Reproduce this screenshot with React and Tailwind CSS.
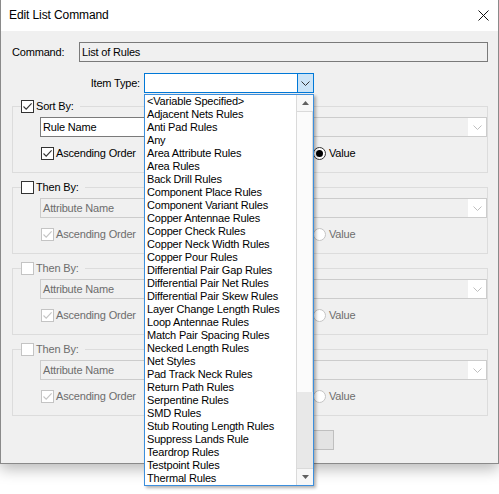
import React from "react";

const ITEMS = [
  "<Variable Specified>",
  "Adjacent Nets Rules",
  "Anti Pad Rules",
  "Any",
  "Area Attribute Rules",
  "Area Rules",
  "Back Drill Rules",
  "Component Place Rules",
  "Component Variant Rules",
  "Copper Antennae Rules",
  "Copper Check Rules",
  "Copper Neck Width Rules",
  "Copper Pour Rules",
  "Differential Pair Gap Rules",
  "Differential Pair Net Rules",
  "Differential Pair Skew Rules",
  "Layer Change Length Rules",
  "Loop Antennae Rules",
  "Match Pair Spacing Rules",
  "Necked Length Rules",
  "Net Styles",
  "Pad Track Neck Rules",
  "Return Path Rules",
  "Serpentine Rules",
  "SMD Rules",
  "Stub Routing Length Rules",
  "Suppress Lands Rule",
  "Teardrop Rules",
  "Testpoint Rules",
  "Thermal Rules",
];

function Check({ checked, disabled }) {
  return (
    <span
      className={
        disabled
          ? "flex h-[13px] w-[13px] shrink-0 items-center justify-center border border-[#c4c4c4] bg-white"
          : "flex h-[13px] w-[13px] shrink-0 items-center justify-center border border-[#333333] bg-white"
      }
    >
      {checked && (
        <svg width="11" height="11" viewBox="0 0 11 11">
          <path
            d="M1.5 5.5 L4.2 8.2 L9.6 2.3"
            fill="none"
            stroke={disabled ? "#c4c4c4" : "#333333"}
            strokeWidth="1.1"
          />
        </svg>
      )}
    </span>
  );
}

function Radio({ checked, disabled }) {
  return (
    <svg width="13" height="13" viewBox="0 0 13 13" className="shrink-0">
      <circle cx="6.5" cy="6.5" r="6" fill="white" stroke={disabled ? "#c4c4c4" : "#333333"} strokeWidth="1" />
      {checked && <circle cx="6.5" cy="6.5" r="3.5" fill="#000" />}
    </svg>
  );
}

function Chevron({ color }) {
  return (
    <svg width="9" height="5" viewBox="0 0 9 5">
      <path d="M0.5 0.5 L4.5 4.5 L8.5 0.5" fill="none" stroke={color} strokeWidth="1" />
    </svg>
  );
}

function Group({ enabled, checked, label, comboText, first }) {
  const labelCls = enabled ? "text-black" : "text-[#6d6d6d]";
  return (
    <fieldset className={first ? "border border-[#dcdcdc]" : "mt-[8px] border border-[#dcdcdc]"}>
      <legend className="ml-[8px] flex h-[13px] items-center gap-[2px] pr-[6px]">
        <Check checked={checked} disabled={label === "disabled"} />
        <span className={labelCls + " leading-[13px]"}>{label === "disabled" ? "Then By:" : label}</span>
      </legend>
      <div className="pl-[27px] pt-[4px] pb-[12px]">
        {first ? (
          <div className="flex h-[20px]">
            <div className="flex w-[190px] items-center border-y border-l border-[#7a7a7a] bg-white pl-[2px]">
              Rule Name
            </div>
            <div className="flex flex-1 items-center justify-end border-y border-r border-[#cccccc] bg-[#f0f0f0]">
              <div className="flex h-full w-[18px] items-center justify-center bg-white">
                <Chevron color="#bfbfbf" />
              </div>
            </div>
          </div>
        ) : (
          <div className="flex h-[20px] items-center border border-[#cccccc] bg-[#f0f0f0]">
            <span className="flex-1 pl-[2px] text-[#6d6d6d]">{comboText}</span>
            <div className="flex h-full w-[18px] items-center justify-center bg-white">
              <Chevron color="#bfbfbf" />
            </div>
          </div>
        )}
        <div className="mt-[10px] flex h-[13px] items-center">
          <div className="flex w-[273px] items-center gap-[2px] pl-[1px]">
            <Check checked disabled={!first} />
            <span className={first ? "text-black" : "text-[#6d6d6d]"}>Ascending Order</span>
          </div>
          <div className="flex items-center gap-[3px]">
            <Radio checked={first} disabled={!first} />
            <span className={first ? "text-black" : "text-[#6d6d6d]"}>Value</span>
          </div>
        </div>
      </div>
    </fieldset>
  );
}

export default function App() {
  return (
    <div className="h-[494px] w-[499px] overflow-hidden bg-white font-['Liberation_Sans',Arial,sans-serif] text-[11px] leading-[13px] tracking-[-0.18px] text-black">
      <div className="w-[499px] border-x border-b border-[#8a8a8a] shadow-[0_5px_14px_rgba(0,0,0,0.28)]">
        <div className="flex h-[31px] items-center justify-between bg-white pl-[8px] pr-[9px]">
          <span className="text-[12px] tracking-[-0.1px]">Edit List Command</span>
          <svg width="11" height="11" viewBox="0 0 11 11">
            <path d="M0.5 0.5 L10.5 10.5 M10.5 0.5 L0.5 10.5" stroke="#111" strokeWidth="1" />
          </svg>
        </div>
        <div className="bg-[#f0f0f0] pl-[11px] pr-[10px] pt-[11px] pb-[13px]">
          <div className="flex h-[20px] items-center">
            <span className="w-[67px]">Command:</span>
            <div className="flex h-[20px] flex-1 items-center border border-[#7a7a7a] bg-[#f0f0f0] pl-[2px]">
              List of Rules
            </div>
          </div>
          <div className="mt-[11px] flex h-[20px] items-center">
            <span className="w-[132px] pr-[4px] text-right">Item Type:</span>
            <div className="relative z-10 h-[20px] w-[170px]">
              <div className="flex h-[20px] border border-[#0078d7] bg-white">
                <div className="flex-1" />
                <div className="flex w-[16px] items-center justify-center border-l border-[#0078d7] bg-[#cce4f7]">
                  <Chevron color="#333333" />
                </div>
              </div>
              <div className="absolute left-0 top-[21px] flex h-[392px] w-[170px] border border-[#3c8fdd] bg-white shadow-[2px_2px_3px_rgba(0,0,0,0.3)]">
                <div className="flex-1 pl-[2px]">
                  {ITEMS.map((t) => (
                    <div key={t} className="h-[13px] whitespace-nowrap leading-[13px]">
                      {t}
                    </div>
                  ))}
                </div>
                <div className="flex w-[17px] flex-col">
                  <div className="flex h-[17px] items-center justify-center border-b border-l border-[#dadada] bg-[#f7f7f7]">
                    <svg width="7" height="4" viewBox="0 0 7 4">
                      <path d="M0 4 L3.5 0 L7 4 Z" fill="#606060" />
                    </svg>
                  </div>
                  <div className="h-[280px] border-x border-[#dadada] bg-[#fbfbfb]" />
                  <div className="h-[76px] border-l border-[#dadada] bg-[#e8e8e8]" />
                  <div className="flex h-[17px] items-center justify-center border-l border-t border-[#dadada] bg-[#f7f7f7]">
                    <svg width="7" height="4" viewBox="0 0 7 4">
                      <path d="M0 0 L7 0 L3.5 4 Z" fill="#606060" />
                    </svg>
                  </div>
                </div>
              </div>
            </div>
          </div>
          <div className="mt-[7px]">
            <Group first enabled checked label="Sort By:" />
            <Group enabled label="Then By:" comboText="Attribute Name" />
            <Group label="disabled" comboText="Attribute Name" />
            <Group label="disabled" comboText="Attribute Name" />
          </div>
          <div className="mt-[14px] flex">
            <div className="ml-[247px] h-[20px] w-[75px] border border-[#bfbfbf] bg-[#e3e3e3]" />
          </div>
        </div>
      </div>
    </div>
  );
}
